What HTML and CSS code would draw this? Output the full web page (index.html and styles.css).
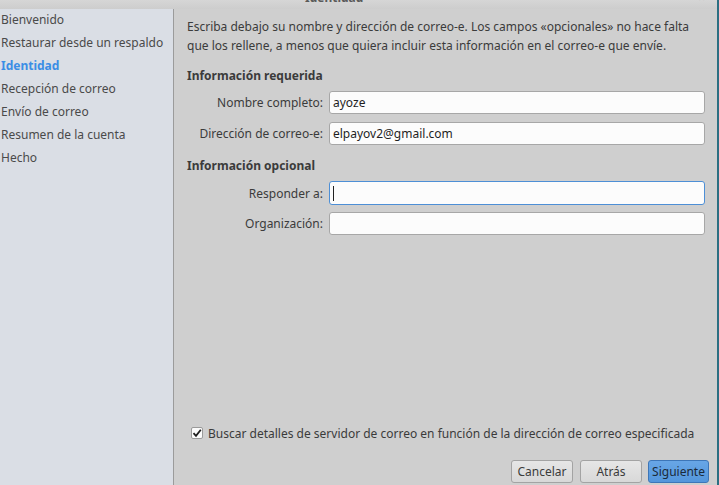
FILE: index.html
```html
<!DOCTYPE html>
<html lang="es">
<head>
<meta charset="utf-8">
<title>Identidad</title>
<link rel="stylesheet" href="styles.css">
</head>
<body>
<div class="window">
  <div class="titlebar">
    <span class="title">Identidad</span>
    <span class="controls"><span>–</span><span>×</span></span>
  </div>
  <div class="body">
    <nav class="sidebar">
      <div class="item">Bienvenido</div>
      <div class="item">Restaurar desde un respaldo</div>
      <div class="item active">Identidad</div>
      <div class="item">Recepción de correo</div>
      <div class="item">Envío de correo</div>
      <div class="item">Resumen de la cuenta</div>
      <div class="item">Hecho</div>
    </nav>
    <main class="content">
      <p class="intro">Escriba debajo su nombre y dirección de correo-e. Los campos «opcionales» no hace falta que los rellene, a menos que quiera incluir esta información en el correo-e que envíe.</p>
      <h2 class="section">Información requerida</h2>
      <div class="form">
        <label class="label">Nombre completo:</label>
        <div class="input">ayoze</div>
        <label class="label">Dirección de correo-e:</label>
        <div class="input">elpayov2@gmail.com</div>
      </div>
      <h2 class="section">Información opcional</h2>
      <div class="form opt">
        <label class="label">Responder a:</label>
        <div class="input focus"><span class="caret"></span></div>
        <label class="label">Organización:</label>
        <div class="input"></div>
      </div>
      <div class="spacer"></div>
      <div class="check">
        <span class="box"><svg width="10" height="10" viewBox="0 0 10 10"><path d="M1.5 5.2 L4 7.8 L8.8 1.8" fill="none" stroke="#1e1e1e" stroke-width="1.8"/></svg></span>
        <span>Buscar detalles de servidor de correo en función de la dirección de correo especificada</span>
      </div>
      <div class="buttons">
        <button class="btn">Cancelar</button>
        <button class="btn">Atrás</button>
        <button class="btn primary">Siguiente</button>
      </div>
    </main>
  </div>
</div>
</body>
</html>
```
FILE: styles.css
```css
html, body {
  margin: 0;
  padding: 0;
}
body {
  width: 719px;
  height: 485px;
  overflow: hidden;
  font-family: "Noto Sans", "Open Sans", sans-serif;
  font-size: 12px;
  color: #3b3b3b;
  background: #cfcfcf;
}
.window {
  display: flex;
  flex-direction: column;
  width: 717px;
  height: 485px;
  border-right: 2px solid #2b6f82;
}
.titlebar {
  height: 9px;
  flex: none;
  overflow: hidden;
  display: flex;
  align-items: flex-start;
  background: linear-gradient(#d6d6d6, #cdcdcd);
  color: #5a5a5a;
}
.title {
  margin-top: -11px;
  margin-left: 305px;
  font-weight: bold;
  font-size: 12px;
  line-height: 18px;
}
.controls {
  margin-top: -11px;
  margin-left: auto;
  margin-right: 12px;
  display: flex;
  gap: 12px;
  line-height: 18px;
  color: #777;
}
.body {
  flex: 1;
  display: flex;
  min-height: 0;
}
.sidebar {
  width: 173px;
  flex: none;
  background: #dadee5;
  border-right: 1px solid #9b9b9b;
}
.item {
  height: 23px;
  line-height: 21px;
  padding-left: 1px;
  white-space: nowrap;
  color: #4a4a4a;
}
.item.active {
  color: #3b8ee5;
  font-weight: bold;
}
.content {
  flex: 1;
  display: flex;
  flex-direction: column;
  padding: 8px 12px 2px 13px;
}
.intro {
  margin: 0;
  line-height: 19px;
}
.section {
  margin: 12px 0 7px;
  font-size: 12px;
  font-weight: bold;
  line-height: 17px;
}
.form {
  display: grid;
  grid-template-columns: 136px 1fr;
  column-gap: 6px;
  row-gap: 8px;
  align-items: center;
}
.form.opt {
  row-gap: 7px;
}
.label {
  text-align: right;
  white-space: nowrap;
}
.input {
  height: 21px;
  border: 1px solid #a7a7a7;
  border-radius: 3px;
  background: #fcfcfc;
  padding: 0 3px;
  color: #1f1f1f;
  display: flex;
  align-items: center;
}
.input.focus {
  border-color: #4d8fd6;
  height: 22px;
}
.caret {
  display: inline-block;
  width: 1px;
  height: 15px;
  background: #222;
}
.spacer {
  flex: 1;
}
.check {
  display: flex;
  align-items: center;
  gap: 5px;
  padding-left: 4px;
  height: 20px;
}
.box {
  width: 10px;
  height: 10px;
  border: 1px solid #9a9a9a;
  border-radius: 2px;
  background: #fbfbfb;
  display: flex;
  align-items: center;
  justify-content: center;
}
.buttons {
  display: flex;
  justify-content: flex-end;
  gap: 7px;
  margin-top: 17px;
  margin-right: -4px;
}
.btn {
  font-family: "Noto Sans", "Open Sans", sans-serif;
  font-size: 12px;
  color: #3b3b3b;
  height: 23px;
  width: 62px;
  padding: 0 2px;
  border: 1px solid #a3a3a3;
  border-radius: 3px;
  background: linear-gradient(#e6e6e6, #d8d8d8);
}
.btn.primary {
  width: 61px;
  margin-left: -1px;
  border-color: #3d76b8;
  background: linear-gradient(#68a6e6, #5396dc);
  color: #1a2a3a;
}
```
